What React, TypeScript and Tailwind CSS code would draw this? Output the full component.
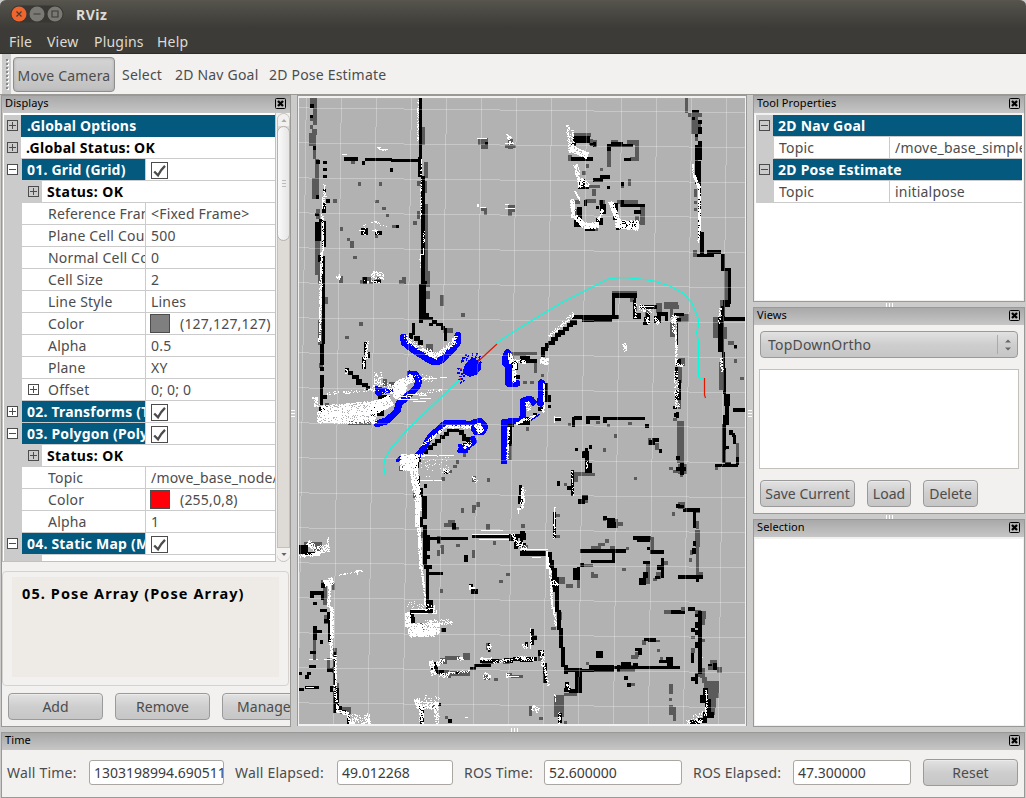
import React from "react";

type Tile = {
  x: number;
  y: number;
  gray: string;
  black: string;
  white?: string;
  clouds?: number[][];
};

// Each tile covers one region of the map; its units are thirds of a pixel.
// gray / black / white: "x,y,w,h" cells. clouds: [x1, y1, x2, y2, spread, count].
const tiles: Tile[] = [
  {
    x: 296,
    y: 94,
    gray:
      "42,12,21,20 52,32,11,40 42,72,21,8 50,80,13,14 42,93,9,12 48,105,14,18 40,118,21,37 51,156,9,40 57,196,12,56 48,252,20,62 60,345,12,30 57,440,15,104 66,540,12,30 87,610,9,20 378,100,9,54 384,204,12,48 384,262,10,36 384,330,12,200 387,530,15,50 390,590,12,24 363,262,12,14 165,200,12,9 186,264,9,12 249,264,9,12 111,315,12,12 237,318,12,9 258,339,12,9 270,360,9,9 132,399,9,12 153,432,9,9 162,441,11,21 171,486,12,9 351,381,12,12 288,393,12,9 237,420,9,11 198,549,27,12 240,549,15,10 318,549,12,20 309,558,12,12 129,546,11,20 192,558,12,12 219,558,12,12 432,603,11,27 546,132,30,21 555,153,20,11 637,135,15,29 628,153,31,9 555,342,18,10 564,350,9,12 636,332,22,21 636,350,11,15 363,350,9,24",
    black:
      "42,31,11,10 42,63,9,9 51,156,8,12 60,198,12,12 60,304,8,10 57,357,12,10 58,385,18,56 69,375,12,8 66,484,13,19 78,380,12,80 78,485,9,145 78,326,12,30 81,201,12,8 81,222,12,8 81,243,12,9 81,285,9,8 90,315,12,11 144,189,42,11 198,201,9,11 207,192,80,10 285,194,87,10 282,223,9,11 369,12,9,236 375,246,12,382 366,190,9,58 195,402,20,20 237,411,20,12 300,393,9,9 567,144,9,9 201,549,11,20 234,558,21,10 369,570,20,60 384,561,9,10",
    white: "138,180,15,3 243,159,9,3 249,165,27,3 189,408,18,3 228,408,18,3 544,132,30,3 627,147,27,3 552,339,18,3 543,330,6,9 627,330,12,3 627,342,30,3 81,306,12,3 78,310,4,36 381,462,3,20 371,480,10,3 371,480,3,24 120,549,15,3 129,540,3,18",
    clouds: [[365, 15, 365, 140, 3, 55], [375, 190, 372, 375, 3, 62], [383, 410, 383, 450, 2, 12], [371, 485, 371, 520, 3, 12], [78, 360, 80, 470, 5, 100], [76, 470, 72, 630, 7, 240], [84, 265, 84, 345, 6, 32], [205, 385, 205, 422, 8, 12], [225, 380, 270, 395, 10, 14], [235, 405, 245, 420, 5, 12], [225, 540, 262, 545, 20, 75], [195, 562, 250, 562, 7, 20], [120, 550, 132, 545, 8, 12], [635, 118, 645, 150, 14, 30], [245, 161, 270, 166, 7, 16]],
  },
  {
    x: 520,
    y: 94,
    gray:
      "495,12,9,45 504,57,42,11 513,68,21,52 522,90,20,24 525,130,10,10 525,198,9,36 522,285,9,23 522,321,9,9 522,342,9,9 519,468,12,20 613,530,12,100 600,625,24,6 162,118,50,11 207,135,12,17 219,139,11,20 144,183,12,18 261,150,12,70 273,139,20,12 322,138,34,15 346,153,10,48 330,190,16,10 198,210,9,12 186,231,12,12 240,222,9,9 189,273,50,10 216,285,11,20 324,255,9,21 303,270,9,12 195,315,33,12 165,318,15,12 238,318,18,14 291,318,35,12 325,318,29,12 360,330,15,62 345,366,12,35 354,381,18,10 222,402,12,9 276,590,75,18 330,600,18,24 432,624,42,8 165,345,10,40 285,345,10,15",
    black:
      "516,48,21,9 516,68,9,10 534,78,12,12 534,99,12,20 525,120,10,10 534,140,12,12 525,152,21,46 525,200,18,35 525,235,18,34 534,264,9,170 540,414,11,65 531,479,50,10 561,468,42,12 603,480,11,50 613,522,20,8 624,529,9,101 160,126,51,21 154,147,14,12 210,147,9,10 219,145,10,14 153,189,66,12 261,151,12,20 273,145,35,14 308,151,30,9 312,192,21,9 240,243,30,12 219,252,30,12 303,264,9,13 261,276,9,9 177,255,18,24 174,277,33,8 240,318,10,38 240,330,18,30 228,336,9,9 192,318,9,18 171,340,14,36 162,378,27,20 228,372,20,22 195,402,30,8 276,327,18,25 300,318,12,20 308,330,44,10 342,348,20,12 352,330,23,9 300,380,57,25 288,399,12,9 279,343,12,35 276,598,75,14 276,598,10,32 342,612,6,18",
    clouds: [[141, 90, 151, 175, 10, 85], [150, 160, 202, 184, 20, 220], [156, 105, 158, 170, 7, 60], [165, 210, 181, 278, 13, 160], [178, 255, 205, 275, 14, 55], [164, 291, 178, 318, 5, 35], [155, 315, 160, 370, 12, 200], [165, 365, 190, 394, 14, 170], [190, 394, 235, 392, 17, 220], [232, 380, 248, 345, 8, 40], [270, 322, 296, 385, 14, 210], [285, 390, 355, 398, 20, 300], [290, 380, 355, 384, 10, 85], [516, 210, 520, 245, 4, 32], [521, 245, 537, 280, 7, 110], [536, 280, 538, 410, 6, 240], [536, 410, 534, 445, 5, 32]],
  },
  {
    x: 296,
    y: 300,
    gray:
      "66,60,12,75 69,190,12,14 84,0,10,11 432,0,11,18 495,39,12,11 188,66,12,11 147,108,12,9 87,309,12,12 440,84,32,15 260,237,12,20 279,247,18,12 390,133,20,25 369,122,12,12 309,498,12,14 480,480,9,12 500,460,10,10 572,534,10,11 528,529,12,18 435,530,12,12 459,510,9,9 540,606,11,14 528,616,12,14 378,605,12,25 350,580,11,15 470,495,12,9 155,364,70,10 645,156,45,12 690,380,9,12 636,430,12,50 640,165,15,15",
    black:
      "78,0,9,132 72,132,11,62 72,200,11,12 72,225,12,35 72,260,9,55 81,285,11,12 369,0,21,42 369,42,11,26 380,40,18,20 398,50,14,11 408,60,14,12 420,68,20,11 399,69,12,10 435,79,12,11 444,85,10,38 348,70,9,34 340,98,12,18 354,108,18,16 366,120,14,14 205,126,9,40 211,155,10,20 198,172,12,34 147,204,12,12 156,214,14,12 168,225,20,13 180,238,18,16 198,250,18,12 210,258,12,12 240,264,12,10 246,285,36,12 225,318,40,30 70,320,20,20 360,470,14,15 355,485,15,20 370,460,10,10 384,448,12,14 396,436,14,14 408,428,14,10 418,416,16,14 432,404,16,12 444,396,14,12 453,388,36,8 488,390,16,16 498,402,12,20 510,410,12,20 500,428,22,12 504,440,18,10 633,372,20,10 636,378,12,60 660,370,30,6 645,182,20,28 648,225,24,12 384,552,8,12 363,527,10,35 369,565,12,25 378,588,15,42 444,510,12,12 669,555,10,30 666,588,15,25",
    white: "384,235,38,3 432,232,20,3 310,296,55,3 335,282,30,3 370,286,22,3 350,302,40,3 372,293,33,3 312,289,20,3 378,464,45,3 430,466,44,3 372,541,38,3 415,539,22,3",
    clouds: [[72, 0, 70, 125, 6, 150], [212, 122, 210, 175, 7, 65], [205, 170, 200, 205, 6, 30], [150, 205, 150, 220, 4, 10], [325, 105, 340, 125, 12, 22], [335, 120, 390, 155, 14, 85], [388, 153, 425, 168, 20, 120], [420, 168, 476, 122, 14, 120], [468, 122, 480, 106, 9, 30], [295, 270, 320, 250, 34, 330], [315, 248, 350, 232, 24, 200], [75, 335, 250, 317, 37, 1150], [62, 350, 240, 352, 35, 1150], [230, 326, 285, 298, 34, 440], [290, 286, 325, 260, 28, 250], [245, 215, 245, 260, 25, 48], [90, 280, 235, 268, 9, 60], [235, 245, 300, 280, 35, 75], [55, 290, 62, 320, 15, 50], [340, 230, 410, 235, 22, 35], [300, 295, 440, 265, 9, 60], [372, 440, 450, 378, 7, 85], [450, 378, 525, 379, 9, 140], [540, 370, 555, 395, 20, 110], [500, 438, 525, 430, 14, 42], [312, 485, 365, 490, 48, 650], [340, 465, 385, 465, 9, 50], [352, 505, 360, 570, 22, 380], [362, 570, 366, 630, 18, 280], [375, 500, 460, 490, 60, 35], [440, 510, 460, 515, 15, 25], [530, 528, 540, 545, 9, 25], [640, 158, 645, 190, 12, 60], [640, 180, 688, 185, 12, 65], [655, 190, 652, 245, 12, 150], [637, 380, 632, 480, 6, 90], [660, 370, 686, 355, 7, 65], [680, 565, 678, 625, 12, 75]],
  },
  {
    x: 520,
    y: 300,
    gray:
      "0,156,52,10 42,188,9,32 63,222,9,10 9,243,12,9 30,243,12,9 339,12,11,20 375,30,12,30 408,10,18,30 433,6,33,22 450,18,9,35 477,42,30,25 463,14,15,12 450,65,15,45 478,175,16,24 474,200,12,50 475,252,9,75 459,354,12,9 470,362,22,128 474,492,27,30 447,500,11,10 459,510,20,9 480,520,9,10 579,50,15,64 605,80,15,36 623,123,18,13 641,135,10,12 597,185,12,84 642,177,9,11 660,232,12,9 648,430,9,45 610,420,9,65 145,370,9,9 228,364,12,9 261,372,9,9 324,366,12,9 282,402,9,12 383,414,11,20 404,430,12,20 250,444,9,12 342,532,9,8 163,516,48,11 163,525,11,20 210,520,14,8 132,550,9,9 195,595,9,13 474,607,20,20 585,500,10,11 627,492,12,8 600,0,15,32",
    black:
      "276,0,9,50 270,45,27,11 156,45,120,12 186,50,90,15 150,60,20,14 140,70,20,12 128,80,20,12 115,90,20,14 104,99,20,13 94,111,20,12 84,122,20,12 75,130,12,14 63,140,20,13 63,150,12,20 0,168,30,20 30,177,22,11 339,0,9,42 339,38,24,18 360,15,50,12 372,50,18,20 378,38,12,14 402,48,20,20 411,36,33,12 462,38,30,10 435,45,10,18 465,55,18,12 369,66,14,10 468,177,14,20 471,68,4,70 465,200,8,40 474,240,9,28 466,270,16,30 460,318,10,10 468,335,10,20 462,340,15,12 468,468,12,12 480,490,12,34 468,500,30,12 609,0,22,20 603,18,12,32 594,50,18,105 612,50,12,14 618,52,58,10 605,155,10,55 609,205,9,78 612,283,18,34 615,315,12,35 608,345,18,30 606,372,13,78 606,450,8,40 612,438,16,10 615,486,18,12 585,492,70,10 648,470,9,26 638,405,10,28 627,390,12,15 636,400,10,10 639,324,37,12 642,135,9,9 75,250,9,55 83,285,9,20 84,315,9,10 54,322,18,12 0,368,30,8 9,350,20,20 104,352,20,12 157,350,9,30 163,349,24,10 198,348,42,12 198,360,12,12 249,351,126,10 249,360,12,10 375,372,12,12 386,420,20,14 395,414,22,11 417,448,9,10 165,444,9,9 207,434,8,14 195,444,10,20 186,454,20,20 195,472,12,45 207,490,8,26 195,500,20,18 153,510,8,30 153,538,9,50 141,558,13,12 111,543,9,15 185,585,18,16 175,598,20,13 468,613,12,10 489,625,50,6 39,340,12,12",
    white: "104,350,18,3 102,348,3,20 360,18,42,3",
    clouds: [[85, 108, 155, 45, 10, 75], [157, 36, 157, 50, 5, 14], [60, 180, 84, 184, 20, 90], [70, 250, 71, 325, 5, 85], [20, 305, 25, 330, 12, 50], [0, 365, 45, 345, 9, 38], [310, 128, 316, 152, 10, 35], [355, 18, 392, 35, 16, 35], [378, 52, 385, 70, 10, 35], [405, 50, 414, 72, 10, 35], [460, 42, 462, 98, 14, 85], [466, 98, 468, 192, 6, 105], [465, 190, 488, 196, 6, 25], [466, 208, 470, 320, 13, 95], [600, 22, 597, 70, 7, 35], [602, 173, 606, 214, 7, 35], [66, 325, 69, 335, 6, 15], [345, 5, 345, 55, 4, 24], [200, 480, 200, 505, 3, 12], [155, 510, 158, 588, 3, 25], [5, 560, 8, 600, 10, 30]],
  },
  {
    x: 296,
    y: 505,
    gray:
      "495,10,10,14 528,3,10,20 456,45,20,20 445,54,20,13 480,65,10,9 570,57,12,22 422,92,12,26 527,135,10,24 591,108,9,12 480,117,12,9 422,135,10,18 433,120,11,10 435,130,9,18 25,111,52,12 54,123,20,15 610,226,11,9 631,204,11,9 432,252,9,12 375,80,12,18 435,370,11,12 372,354,12,24 51,390,10,76 75,225,12,9 108,235,9,20 81,240,12,60 84,330,15,27 93,460,10,30 110,430,12,28 118,535,12,55 132,606,33,20 153,620,10,30 108,485,8,18 500,444,22,20 447,453,45,12 433,460,20,18 430,495,30,14 463,498,60,14 454,510,12,8 570,414,12,20 575,430,10,11 558,468,35,10 600,462,20,9 622,465,20,12 630,504,18,12 645,510,36,9 565,510,18,14 594,520,12,8 447,633,9,9 405,600,20,12",
    black:
      "378,0,15,42 370,36,12,30 381,60,12,120 384,90,18,26 390,117,12,20 393,150,10,12 384,180,25,12 384,96,132,10 528,87,162,12 423,101,10,14 467,54,12,20 505,150,10,22 390,190,9,128 398,201,43,9 399,286,12,38 342,314,70,11 342,325,12,30 350,336,6,20 9,120,28,28 24,142,37,8 25,120,10,6 525,252,20,14 519,238,12,10 75,235,12,15 42,258,42,12 42,268,12,10 75,264,9,20 51,291,12,9 72,312,22,9 94,320,9,25 84,342,15,12 51,364,12,40 51,375,27,10 72,404,9,12 42,438,18,9 39,480,21,9 33,500,12,10 27,510,12,12 9,501,9,9 27,543,42,9 9,550,15,9 96,345,8,65 111,440,9,110 93,489,18,12 102,542,10,20 111,558,9,65 111,604,27,10 120,550,9,55 135,615,15,10 153,632,9,24 411,470,12,20 405,485,22,12 420,496,24,10 522,485,17,10 535,478,50,9 552,465,45,10 585,462,25,12 625,460,25,15 650,456,40,12 372,606,11,50 368,600,8,20 426,594,9,9 456,642,12,12 438,370,12,10 640,87,25,20 655,103,12,30 665,115,24,12 678,132,11,18 680,85,9,20 435,502,10,9 480,500,8,8 576,414,5,26",
    white: "529,87,110,3 555,75,66,3 549,102,90,3 40,462,12,3 60,462,6,3 84,462,24,3 345,312,50,3 345,325,50,3 18,150,50,3 663,8,12,6 666,12,3,16 519,240,6,15 525,247,12,4 180,195,18,3 184,195,3,16 555,460,33,3 640,514,30,3 508,636,9,3 30,546,25,3",
    clouds: [[363, 0, 363, 65, 15, 280], [367, 65, 374, 190, 9, 290], [376, 190, 388, 300, 5, 120], [10, 152, 70, 145, 9, 75], [35, 110, 60, 135, 18, 70], [55, 135, 95, 128, 22, 120], [94, 95, 96, 140, 5, 35], [83, 235, 110, 225, 19, 130], [99, 230, 97, 305, 8, 145], [105, 305, 106, 400, 10, 240], [103, 400, 106, 460, 8, 105], [117, 450, 119, 540, 6, 125], [115, 540, 124, 610, 9, 60], [120, 615, 155, 625, 10, 55], [155, 630, 162, 654, 8, 35], [165, 640, 220, 642, 28, 100], [215, 625, 220, 655, 7, 25], [118, 210, 188, 198, 4, 22], [196, 187, 197, 200, 2, 4], [335, 295, 415, 310, 22, 40], [333, 320, 336, 365, 17, 190], [335, 370, 430, 370, 32, 720], [340, 388, 415, 386, 14, 210], [385, 350, 470, 350, 14, 80], [410, 300, 415, 325, 15, 28], [403, 465, 412, 510, 15, 90], [420, 475, 445, 462, 15, 45], [480, 460, 502, 460, 8, 26], [430, 505, 455, 514, 14, 40], [455, 504, 522, 496, 6, 30], [550, 462, 588, 460, 9, 40], [575, 420, 583, 430, 14, 20], [562, 508, 580, 520, 20, 40], [590, 470, 650, 462, 10, 35], [655, 458, 690, 455, 7, 24], [628, 508, 640, 512, 14, 18], [360, 580, 368, 610, 16, 90], [370, 600, 425, 600, 22, 145], [375, 610, 375, 655, 12, 75], [420, 590, 421, 655, 14, 85], [370, 580, 430, 580, 22, 28], [665, 110, 690, 133, 14, 45], [648, 85, 665, 120, 8, 40]],
  },
  {
    x: 520,
    y: 505,
    gray:
      "108,28,11,9 108,90,11,10 3,57,12,11 0,120,24,10 456,22,10,10 474,3,20,9 520,12,20,12 527,48,11,25 526,75,14,50 528,125,9,85 538,202,10,10 282,42,12,28 292,51,16,12 248,35,10,12 390,95,11,42 390,105,12,32 318,126,9,9 213,123,30,10 235,114,20,10 256,102,12,11 180,177,40,8 213,200,10,19 222,207,12,12 306,189,12,9 378,177,11,60 408,201,15,20 400,220,12,9 432,168,12,12 507,158,9,12 511,135,9,14 118,216,18,22 138,238,21,10 170,188,10,60 93,365,14,10 117,320,9,25 96,220,12,9 432,315,22,12 483,306,12,20 526,315,16,15 536,318,21,24 547,342,9,18 514,393,12,9 514,430,12,15 546,402,9,10 366,404,12,15 408,405,12,7 411,432,9,8 333,450,21,12 345,440,12,15 420,455,9,12 228,450,12,9 198,472,10,8 295,480,50,20 570,465,22,30 590,485,15,20 565,483,12,12 525,505,25,10 540,490,14,30 553,528,44,52 565,575,22,35 570,600,15,30 547,515,15,20 447,538,12,30 448,579,9,9 447,600,11,30 458,605,10,44 333,534,12,10 102,570,30,65 132,564,40,9 132,648,9,8 27,603,9,30 57,636,12,9 0,510,9,8 54,450,12,18 42,390,8,14 270,122,14,12",
    black:
      "98,20,10,80 260,38,26,30 276,50,12,20 248,33,12,12 339,93,54,12 351,100,40,12 180,133,138,10 276,142,9,28 213,165,72,10 180,174,12,12 158,190,22,35 170,186,10,30 382,126,9,10 390,136,42,10 369,168,20,10 369,200,15,20 358,219,20,20 424,160,8,60 411,180,18,15 405,213,15,9 470,0,21,10 489,12,50,9 519,20,9,48 519,108,9,16 516,130,12,18 474,210,75,12 528,220,9,12 0,138,80,15 84,141,12,30 88,165,14,30 95,190,15,30 104,225,14,95 94,215,24,30 98,225,9,35 112,315,12,60 118,370,10,60 123,425,12,62 132,480,12,28 144,490,40,10 165,490,20,70 148,553,38,11 132,550,20,12 180,492,28,8 207,480,75,20 280,484,200,9 291,480,10,22 302,471,30,12 339,474,14,8 417,465,25,10 438,455,20,20 440,472,20,12 385,400,22,10 372,399,18,8 345,429,20,10 353,439,12,10 228,438,20,21 312,513,12,12 320,535,14,10 475,317,20,9 453,315,31,12 503,306,22,12 526,326,20,10 534,318,12,190 525,350,12,20 514,368,12,14 525,375,12,15 525,410,12,20 514,444,9,30 525,506,10,30 513,515,22,12 579,474,11,20 565,477,12,6 550,548,14,34 540,570,15,24 555,582,18,40 550,622,33,18 534,640,28,15 510,645,30,12 30,371,12,50 39,393,11,12 15,412,9,15 0,455,40,15 39,457,12,10 54,436,18,18 69,475,12,60 114,625,12,30 135,530,12,25 0,78,15,25 0,90,10,35 0,5,4,10",
    white: "102,5,3,68 0,133,85,3 36,156,27,3 78,137,5,54 96,238,20,3",
    clouds: [[102, 5, 102, 100, 4, 35], [79, 150, 90, 205, 6, 75], [90, 205, 95, 310, 6, 135], [99, 305, 107, 362, 6, 60], [95, 225, 110, 240, 10, 30], [29, 367, 31, 430, 4, 40], [10, 415, 18, 430, 13, 24], [0, 460, 40, 460, 11, 45], [65, 435, 68, 485, 13, 50], [70, 480, 85, 540, 8, 50], [34, 605, 54, 615, 16, 40], [103, 565, 104, 590, 4, 14], [118, 622, 116, 655, 6, 30], [135, 530, 148, 550, 7, 18], [557, 555, 559, 585, 4, 34], [560, 590, 555, 630, 5, 36], [495, 650, 545, 646, 12, 48], [515, 635, 550, 625, 15, 20], [545, 455, 547, 460, 2, 2]],
  },
];

const cells = (s: string) =>
  s
    .split(" ")
    .map((c) => {
      const [x, y, w, h] = c.split(",").map(Number);
      return `M${x} ${y}h${w}v${h}h${-w}z`;
    })
    .join("");

// Scatters laser hits along a segment, with a fixed seed so the scan is stable.
const scatter = (list: number[][]) => {
  let seed = 7919;
  const rnd = () => {
    seed = (seed * 16807) % 2147483647;
    return seed / 2147483647;
  };
  const out: string[] = [];
  for (const [x1, y1, x2, y2, spread, count] of list) {
    const len = Math.hypot(x2 - x1, y2 - y1) || 1;
    for (let i = 0; i < count; i++) {
      const t = rnd();
      const off = (rnd() - 0.5) * spread;
      const px = x1 + (x2 - x1) * t - ((y2 - y1) / len) * off;
      const py = y1 + (y2 - y1) * t + ((x2 - x1) / len) * off;
      out.push(`M${Math.round(px / 3) * 3} ${Math.round(py / 3) * 3}h3v3h-3z`);
    }
  }
  return out.join("");
};

const steps = (n: number) => Array.from({ length: n }, (_, i) => i);

function MapView() {
  return (
    <svg viewBox="299 98 446 626" className="block h-[626px] w-[446px] bg-[#b2b2b2]" shapeRendering="crispEdges">
      {tiles.map((t, i) => (
        <g key={i} transform={`translate(${t.x} ${t.y}) scale(0.333333)`}>
          <path d={cells(t.gray)} fill="#5a5a5a" />
          <path d={cells(t.black)} fill="#000" />
        </g>
      ))}
      <g transform="translate(296 300) scale(0.333333)" fill="none" stroke="#00f" strokeWidth="21" strokeLinejoin="round" strokeLinecap="round">
        <path d="M322 112L325 128L345 144L366 158L388 172L410 185H426L439 178L454 161L470 147L486 126V106" />
        <path d="M342 222L358 224L369 240L362 262L344 280L326 296L309 310L304 332L288 348L270 363L244 371" />
        <path d="M244 265L258 272H284M245 279L270 272" strokeWidth="16" />
        <path d="M366 466L382 446L400 414L418 396L448 370L500 369L526 374" strokeWidth="19" />
        <path d="M532 368L553 362L568 380L560 396H540L530 382Z" strokeWidth="18" />
        <path d="M495 448L515 440L536 425L530 415" strokeWidth="16" />
        <path d="M490 436H504M488 454H512" strokeWidth="9" />
        <path d="M304 482L312 474" strokeWidth="10" />
        <path d="M634 158L628 176V190L638 200V228L638 250H662" />
        <path d="M624 484L625 365L672 363L681 350V302L694 298H706L712 306" strokeLinecap="square" strokeWidth="18" />
        <path d="M736 248L734 310" strokeWidth="20" />
        <path d="M706 360L730 344" strokeWidth="4" />
        <path d="M508 198L520 182L535 176L552 192L554 206L540 222L520 228L502 218Z" fill="#00f" strokeWidth="5" />
        <path
          d="M502 172L495 190M512 162L500 185M518 166L510 182M530 160L528 180M544 160L538 178M552 168L545 184M484 204L500 212M484 218L504 224M490 230L506 228M486 240L500 236M492 250L506 240M550 175L555 190"
          strokeWidth="5"
          strokeDasharray="7 3"
          strokeLinecap="butt"
        />
      </g>
      {tiles.map((t, i) => (
        <g key={i} transform={`translate(${t.x} ${t.y}) scale(0.333333)`} fill="#fff">
          {t.white ? <path d={cells(t.white)} /> : null}
          {t.clouds ? <path d={scatter(t.clouds)} /> : null}
        </g>
      ))}
      <g stroke="#fff" strokeOpacity="0.27" strokeWidth="1">
        {steps(13).map((i) => (
          <line key={`v${i}`} x1={306.3 + 35.05 * i} y1={98} x2={298 + 35.05 * i} y2={724} />
        ))}
        {steps(18).map((i) => (
          <line key={`h${i}`} x1={299} y1={107.9 + 35 * i} x2={745} y2={112.6 + 35 * i} />
        ))}
      </g>
      <g fill="none" strokeWidth="1.200" shapeRendering="geometricPrecision">
        <path
          stroke="#00ffe1"
          d="M385.5 476L383.500 466L385 459L391 448L409 428L459 380M495 344L507 336L526 324L561 303L608 279L622 277.500L641 279L654 281L670 286L683 293L692 303L698.500 319V326L696.500 332L698.500 341V376L700 379L703 378"
        />
        <path stroke="#e01800" d="M478.500 361L497 344M704.500 378V395L705.500 398M461 368V370M460 378L461 380" />
      </g>
    </svg>
  );
}

function CloseBox() {
  return (
    <svg viewBox="0 0 11 11" className="h-[11px] w-[11px] shrink-0">
      <rect x="0.500" y="0.500" width="10" height="10" rx="1" fill="none" stroke="#000" />
      <path d="M3 3L8 8M8 3L3 8" stroke="#000" strokeWidth="2.300" />
    </svg>
  );
}

function PanelTitle({ children, close = true }: { children: string; close?: boolean }) {
  return (
    <div className="flex h-[17px] shrink-0 items-center justify-between bg-gradient-to-b from-[#a9a9a9] to-[#c6c6c6] pb-[2px] pl-[3px] pr-[4px] text-[11px] leading-[15px] tracking-[0.1px] text-black">
      <span className="-mt-[2px]">{children}</span>
      {close ? <CloseBox /> : null}
    </div>
  );
}

function Toggle({ open, filled }: { open?: boolean; filled?: boolean }) {
  return (
    <svg viewBox="0 0 11 11" className="h-[11px] w-[11px] shrink-0" shapeRendering="crispEdges">
      <rect x="0.500" y="0.500" width="10" height="10" fill={filled ? "#fff" : "none"} stroke="#4c4c4c" />
      <path d={open ? "M2 5.500H9" : "M2 5.500H9M5.500 2V9"} stroke="#4c4c4c" />
    </svg>
  );
}

function Check() {
  return (
    <svg viewBox="0 0 17 17" className="ml-[5px] mt-[2px] h-[17px] w-[17px]">
      <rect x="0.500" y="0.500" width="16" height="16" fill="#fff" stroke="#4c4c4c" />
      <path d="M3.200 9.500L7 13.300C9 9.500 11 6.500 14 3.800" fill="none" stroke="#4c4c4c" strokeWidth="2.400" />
    </svg>
  );
}

type Row = { kind: "full" | "status" | "plain" | "head" | "item"; label: string; value?: string; color?: string; toggle?: "plus" | "minus" };

const rows: Row[] = [
  { kind: "full", label: ".Global Options", toggle: "plus" },
  { kind: "plain", label: ".Global Status: OK", toggle: "plus" },
  { kind: "head", label: "01. Grid (Grid)", toggle: "minus" },
  { kind: "status", label: "Status: OK" },
  { kind: "item", label: "Reference Frame", value: "<Fixed Frame>" },
  { kind: "item", label: "Plane Cell Count", value: "500" },
  { kind: "item", label: "Normal Cell Count", value: "0" },
  { kind: "item", label: "Cell Size", value: "2" },
  { kind: "item", label: "Line Style", value: "Lines" },
  { kind: "item", label: "Color", value: "(127,127,127)", color: "bg-[#7f7f7f]" },
  { kind: "item", label: "Alpha", value: "0.5" },
  { kind: "item", label: "Plane", value: "XY" },
  { kind: "item", label: "Offset", value: "0; 0; 0", toggle: "plus" },
  { kind: "head", label: "02. Transforms (TF)", toggle: "plus" },
  { kind: "head", label: "03. Polygon (Polygon)", toggle: "minus" },
  { kind: "status", label: "Status: OK" },
  { kind: "item", label: "Topic", value: "/move_base_node/" },
  { kind: "item", label: "Color", value: "(255,0,8)", color: "bg-[#ff0008]" },
  { kind: "item", label: "Alpha", value: "1" },
  { kind: "head", label: "04. Static Map (Map)", toggle: "minus" },
];

function DisplayRow({ row }: { row: Row }) {
  const outer = row.kind !== "item" && row.kind !== "status";
  return (
    <div className="flex h-[22px] w-[271px] shrink-0">
      <div className="flex w-[18px] shrink-0 items-center bg-[#cbcbcb] pb-px pl-[3px]">{outer && row.toggle ? <Toggle open={row.toggle === "minus"} filled={row.kind === "head"} /> : null}</div>
      {row.kind === "full" && <div className="-ml-px flex-1 bg-[#03597e] pl-[6px] font-bold leading-[21px] tracking-[0.2px] text-white">{row.label}</div>}
      {row.kind === "plain" && <div className="-ml-px flex-1 border-b border-[#cbcbcb] bg-white pl-[5px] font-bold leading-[21px] tracking-[0.3px] text-black">{row.label}</div>}
      {row.kind === "status" && (
        <>
          <div className="flex w-[20px] shrink-0 items-center bg-[#cbcbcb] pb-px pl-[6px]">
            <Toggle />
          </div>
          <div className="flex-1 border-b border-[#cbcbcb] bg-white pl-[5px] font-bold leading-[21px] tracking-[0.4px] text-black">{row.label}</div>
        </>
      )}
      {(row.kind === "head" || row.kind === "item") && (
        <>
          {row.kind === "head" ? (
            <div className="w-[123px] shrink-0 overflow-hidden border-b border-[#cbcbcb] bg-[#03597e] pl-[5px] font-bold leading-[21px] text-white">{row.label}</div>
          ) : (
            <div className="flex w-[123px] shrink-0 items-center overflow-hidden border-b border-[#cbcbcb] bg-white pl-[6px] leading-[21px]">
              <span className="w-[20px] shrink-0">{row.toggle ? <Toggle /> : null}</span>
              <span>{row.label}</span>
            </div>
          )}
          <div className="flex flex-1 items-center overflow-hidden border-b border-l border-[#cbcbcb] bg-white leading-[21px]">
            {row.kind === "head" ? <Check /> : null}
            {row.color ? <span className={`ml-[4px] mr-[5px] h-[19px] w-[20px] shrink-0 border border-[#4c4c4c] ${row.color}`} /> : null}
            <span className="pl-[5px]">{row.value}</span>
          </div>
        </>
      )}
    </div>
  );
}

function Button({ children, className }: { children: React.ReactNode; className: string }) {
  return (
    <button
      className={`flex h-[27px] shrink-0 items-center justify-center whitespace-nowrap rounded-[4px] border border-[#9a9a9a] bg-gradient-to-b from-[#e2e2e2] via-[#cecece] to-[#c6c6c6] pb-px tracking-normal shadow-[inset_0_1px_0_#ebebeb] ${className}`}
    >
      {children}
    </button>
  );
}

function Grip({ vertical, className = "" }: { vertical?: boolean; className?: string }) {
  return (
    <div className={`flex ${vertical ? "h-[7px] w-[4px] flex-col" : "h-[4px] w-[7px]"} justify-between ${className}`}>
      {steps(3).map((i) => (
        <span key={i} className={vertical ? "h-px w-full bg-white" : "h-full w-px bg-white"} />
      ))}
    </div>
  );
}

function Scrollbar() {
  return (
    <div className="flex h-[449px] w-[13px] shrink-0 flex-col rounded-full border border-[#c4c0bb] bg-[#dedbd7]">
      <div className="flex h-[12px] items-center justify-center rounded-t-full bg-[#f2f1f0]">
        <svg viewBox="0 0 7 4" className="h-[3px] w-[6px]">
          <path d="M0 4L3.500 0L7 4z" fill="#aaa" />
        </svg>
      </div>
      <div className="-mx-px flex h-[115px] flex-col items-center justify-center gap-[2px] rounded-full border border-[#b5b1ad] bg-gradient-to-r from-[#fafafa] to-[#e6e5e4]">
        <span className="h-px w-[4px] bg-[#bbb]" />
        <span className="h-px w-[4px] bg-[#bbb]" />
        <span className="h-px w-[4px] bg-[#bbb]" />
      </div>
      <div className="flex-1" />
      <div className="-mx-px flex h-[14px] items-center justify-center rounded-b-full border-t border-[#c4c0bb] bg-[#f2f1f0]">
        <svg viewBox="0 0 7 4" className="h-[3px] w-[6px]">
          <path d="M0 0L3.500 4L7 0z" fill="#666" />
        </svg>
      </div>
    </div>
  );
}

function ToolRow({ head, label, value }: { head?: boolean; label: string; value?: string }) {
  return (
    <div className="flex h-[22px]">
      <div className="flex w-[17px] shrink-0 items-center bg-[#cbcbcb] pb-px pl-[3px]">{head ? <Toggle open /> : null}</div>
      {head ? (
        <div className="flex-1 border-b border-[#cbcbcb] bg-[#03597e] pl-[5px] font-bold leading-[21px] tracking-[0.25px] text-white">{label}</div>
      ) : (
        <>
          <div className="w-[116px] shrink-0 border-b border-l border-[#cbcbcb] bg-white pl-[5px] leading-[21px]">{label}</div>
          <div className="flex-1 overflow-hidden border-b border-l border-[#cbcbcb] bg-white pl-[5px] leading-[21px]">{value}</div>
        </>
      )}
    </div>
  );
}

function Field({ value, className }: { value: string; className: string }) {
  return <div className={`h-[25px] shrink-0 overflow-hidden rounded-[3px] border border-[#aaa7a3] bg-white pl-[4px] leading-[23px] tracking-normal text-[#3c3c3c] ${className}`}>{value}</div>;
}

export default function App() {
  return (
    <div className="flex h-[798px] w-[1026px] flex-col overflow-hidden whitespace-nowrap bg-[#cbcbcb] font-['Noto_Sans',sans-serif] text-[14px] tracking-[0.2px] text-[#4c4c4c]">
      <header className="flex h-[28px] shrink-0 items-center rounded-t-[6px] border-t border-[#57554e] bg-gradient-to-b from-[#55534c] to-[#3c3b37] pb-px pl-[10px]">
        <svg viewBox="0 0 54 18" className="h-[18px] w-[54px]">
          <rect x="0.500" y="0.500" width="53" height="17" rx="8.500" fill="#383733" />
          <circle cx="9" cy="9" r="7.500" fill="#f0652d" />
          <circle cx="27" cy="9" r="7.500" fill="#7b7973" />
          <circle cx="45" cy="9" r="7.500" fill="#7b7973" />
          <path d="M6.500 6.500L11.500 11.500M11.500 6.500L6.500 11.500M23.500 9H30.500M42 6H48V12H42Z" fill="none" stroke="#3c3b37" strokeWidth="1.100" />
        </svg>
        <span className="ml-[12px] pt-px font-bold leading-[26px] tracking-[0.5px] text-[#dfdbd2]">RViz</span>
      </header>
      <nav className="flex h-[26px] shrink-0 items-center border-b border-[#2d2c29] bg-[#3c3b37] pt-[2px] text-[#dfdbd2]">
        <span className="ml-[9px] w-[38px]">File</span>
        <span className="w-[47px]">View</span>
        <span className="w-[63px]">Plugins</span>
        <span>Help</span>
      </nav>
      <div className="flex h-[41px] shrink-0 items-center border-b border-[#9a9996] bg-[#f2f1f0] pl-[2px]">
        <div className="flex h-full w-[9px] flex-col items-center justify-center gap-[2px] bg-[#cbcbcb]">
          {steps(8).map((i) => (
            <span key={i} className="h-[2px] w-[2px] bg-[#8a8a8a] shadow-[1px_1px_0_#fff]" />
          ))}
        </div>
        <div className="ml-[2px] flex h-[35px] w-[102px] shrink-0 items-center justify-center rounded-[4px] border border-[#8e8e8e] bg-gradient-to-b from-[#d4d4d4] to-[#c0c0c0] pt-[2px] shadow-[inset_0_0_3px_#aaa]">
          Move Camera
        </div>
        <span className="ml-[7px] w-[53px]">Select</span>
        <span className="w-[94px]">2D Nav Goal</span>
        <span>2D Pose Estimate</span>
      </div>

      <main className="flex h-[632px] shrink-0 pl-px pr-px">
        <section className="flex h-full w-[290px] shrink-0 flex-col overflow-hidden border border-[#9a9996] bg-[#f2f1f0]">
          <PanelTitle>Displays</PanelTitle>
          <div className="flex h-[449px] shrink-0">
            <div className="mr-px flex h-[449px] w-[274px] shrink-0 flex-col overflow-hidden border-b border-l border-r border-[#c4c0bb] bg-white pl-px pt-[2px]">
              {rows.map((r, i) => (
                <DisplayRow key={i} row={r} />
              ))}
              <div className="w-[38px] flex-1 bg-[#cbcbcb]" />
            </div>
            <Scrollbar />
          </div>
          <div className="mt-[9px] h-[115px] w-[287px] shrink-0 rounded-[4px] border border-[#d6d3cf] px-[9px] py-[5px]">
            <div className="h-[100px] bg-[#eeebe7] pl-[10px] pt-[6px] text-[14.500px] font-bold leading-[21px] tracking-[1.1px] text-black">05. Pose Array (Pose Array)</div>
          </div>
          <div className="mt-[7px] flex w-[330px] gap-[12px] pl-[6px]">
            <Button className="w-[95px]">Add</Button>
            <Button className="w-[95px]">Remove</Button>
            <Button className="w-[95px]">Manage...</Button>
          </div>
        </section>
        <div className="flex w-[6px] shrink-0 items-center">
          <Grip vertical className="mb-[-4px]" />
        </div>
        <section className="h-[631px] w-[450px] shrink-0 border border-b-0 border-[#9a9996]">
          <div className="h-[630px] border border-t-2 border-b-2 border-[#f2f1f0]">
            <MapView />
          </div>
        </section>
        <div className="flex w-[6px] shrink-0 items-center">
          <Grip vertical className="mb-[-4px] ml-px" />
        </div>
        <div className="flex w-[272px] shrink-0 flex-col">
          <section className="flex h-[207px] flex-col border border-[#9a9996] bg-white">
            <PanelTitle>Tool Properties</PanelTitle>
            <div className="flex-1 overflow-hidden border border-t-2 border-[#f2f1f0] pl-px pr-px">
              <ToolRow head label="2D Nav Goal" />
              <ToolRow label="Topic" value="/move_base_simple/goal" />
              <ToolRow head label="2D Pose Estimate" />
              <ToolRow label="Topic" value="initialpose" />
            </div>
          </section>
          <div className="flex h-[5px] items-center justify-center pl-px">
            <Grip />
          </div>
          <section className="flex h-[207px] flex-col border border-[#9a9996] bg-[#f2f1f0]">
            <PanelTitle>Views</PanelTitle>
            <div className="mx-[6px] mt-[6px] flex h-[27px] items-center rounded-[4px] border border-[#9a9a9a] bg-gradient-to-b from-[#e2e2e2] via-[#cecece] to-[#c6c6c6] pl-[7px]">
              <span className="flex-1">TopDownOrtho</span>
              <span className="flex h-[19px] w-[20px] items-center justify-center border-l border-[#aaa]">
                <svg viewBox="0 0 6 12" className="h-[12px] w-[6px]">
                  <path d="M0 3.500L3 0.500L6 3.500zM0 8.500L3 11.500L6 8.500z" fill="#666" />
                </svg>
              </span>
            </div>
            <div className="mx-[5px] mt-[11px] h-[100px] border border-[#c4c0bb] bg-white" />
            <div className="mt-[11px] flex gap-[12px] pl-[6px]">
              <Button className="w-[95px]">Save Current</Button>
              <Button className="w-[44px]">Load</Button>
              <Button className="w-[55px]">Delete</Button>
            </div>
          </section>
          <div className="flex h-[5px] items-center justify-center pl-px">
            <Grip />
          </div>
          <section className="flex h-[208px] flex-col border border-[#9a9996] bg-white">
            <PanelTitle>Selection</PanelTitle>
            <div className="flex-1 border border-t-2 border-[#f2f1f0]" />
          </section>
        </div>
      </main>
      <div className="flex h-[5px] shrink-0 items-center justify-center pl-[2px]">
        <Grip />
      </div>
      <footer className="ml-px mr-px flex h-[66px] shrink-0 flex-col border border-[#9a9996] bg-[#f2f1f0]">
        <PanelTitle>Time</PanelTitle>
        <div className="flex h-[46px] items-center pb-px pl-[5px]">
          <span className="w-[82px]">Wall Time:</span>
          <Field value="1303198994.690511" className="w-[135px]" />
          <span className="ml-[11px] w-[102px]">Wall Elapsed:</span>
          <Field value="49.012268" className="w-[116px]" />
          <span className="ml-[11px] w-[80px]">ROS Time:</span>
          <Field value="52.600000" className="w-[138px]" />
          <span className="ml-[11px] w-[100px]">ROS Elapsed:</span>
          <Field value="47.300000" className="w-[118px]" />
          <Button className="ml-[12px] w-[95px]">Reset</Button>
        </div>
      </footer>
    </div>
  );
}
